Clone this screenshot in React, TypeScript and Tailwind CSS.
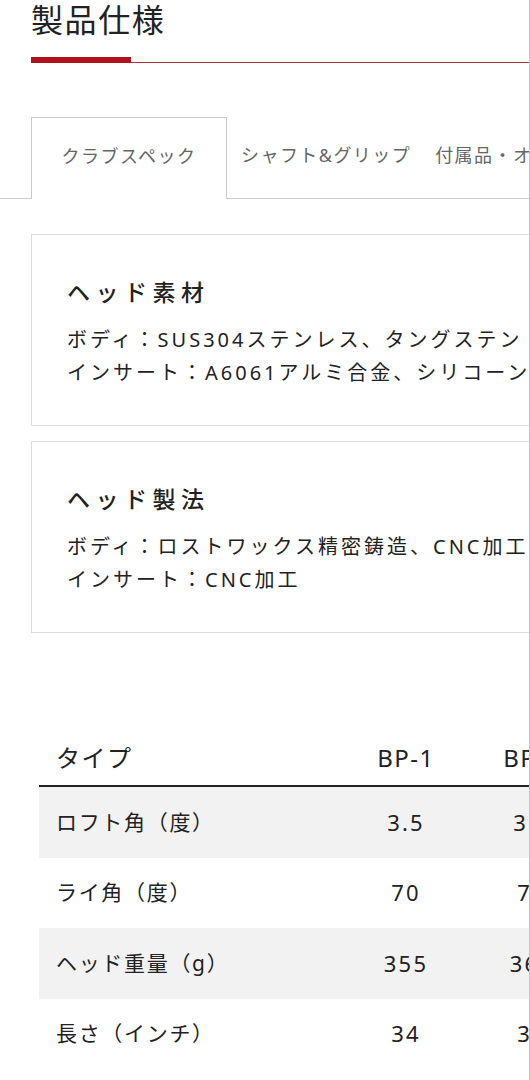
import React from 'react';

const specRows = [
  { label: 'ロフト角（度）', values: ['3.5', '3.5', '3.5'] },
  { label: 'ライ角（度）', values: ['70', '70', '70'] },
  { label: 'ヘッド重量（g）', values: ['355', '360', '365'] },
  { label: '長さ（インチ）', values: ['34', '34', '34'] },
];

const models = ['BP-1', 'BP-2', 'BP-3'];

function InfoCard({ title, lines }: { title: string; lines: string[] }) {
  return (
    <div className="ml-[31px] w-[600px] border border-[#dcdcdc] pt-[39px] pb-[36px] pl-[35px]">
      <h3 className="text-[23px] leading-[36px] font-medium tracking-[0.24em]">{title}</h3>
      <div className="mt-[13px] text-[20px] leading-[33px] tracking-[0.15em] whitespace-nowrap">
        {lines.map((line) => (
          <p key={line}>{line}</p>
        ))}
      </div>
    </div>
  );
}

export default function App() {
  return (
    <div className="w-[530px] h-[1080px] overflow-hidden bg-white border-r border-[#c4c4c4] text-[#222] font-['Noto_Sans','Noto_Sans_CJK_JP',sans-serif]">
      {/* Section title */}
      <div className="pl-[31px]">
        <h2 className="text-[32px] leading-[40px] tracking-[0.05em]">製品仕様</h2>
        <div className="mt-[17px] flex items-end">
          <div className="h-[6px] w-[100px] bg-[#b3111c]" />
          <div className="h-px flex-1 bg-[#a7343b]" />
        </div>
      </div>

      {/* Tabs */}
      <div className="mt-[54px] flex h-[82px] whitespace-nowrap">
        <div className="w-[31px] shrink-0 border-b border-[#cccccc]" />
        <div className="w-[196px] shrink-0 flex items-center justify-center pb-[4px] border-x border-t border-[#cccccc] text-[18px] tracking-[0.08em] text-[#666]">
          クラブスペック
        </div>
        <div className="flex-1 flex items-center pb-[4px] border-b border-[#cccccc] text-[18px] tracking-[0.08em] text-[#666]">
          <span className="pl-[14px] pr-[12px]">シャフト&amp;グリップ</span>
          <span className="px-[12px]">付属品・オプション</span>
        </div>
      </div>

      {/* Cards */}
      <div className="mt-[35px] flex flex-col gap-[15px]">
        <InfoCard
          title="ヘッド素材"
          lines={['ボディ：SUS304ステンレス、タングステン', 'インサート：A6061アルミ合金、シリコーン']}
        />
        <InfoCard
          title="ヘッド製法"
          lines={['ボディ：ロストワックス精密鋳造、CNC加工', 'インサート：CNC加工']}
        />
      </div>

      {/* Spec table */}
      <div className="mt-[98px] ml-[39px] w-[682px] whitespace-nowrap">
        <div className="flex h-[56px] items-center border-b-2 border-[#222] text-[24px] tracking-[0.06em]">
          <div className="w-[304px] pl-[17px]">タイプ</div>
          {models.map((m) => (
            <div key={m} className="w-[126px] text-center">{m}</div>
          ))}
        </div>
        {specRows.map((row, i) => (
          <div
            key={row.label}
            className={`flex h-[70.5px] items-center ${i % 2 === 0 ? 'bg-[#f2f2f2]' : 'bg-white'}`}
          >
            <div className="w-[304px] pl-[17px] text-[21px] tracking-[0.08em]">{row.label}</div>
            {row.values.map((v, j) => (
              <div key={j} className="w-[126px] text-center text-[22px] tracking-[0.1em]">{v}</div>
            ))}
          </div>
        ))}
      </div>
    </div>
  );
}
